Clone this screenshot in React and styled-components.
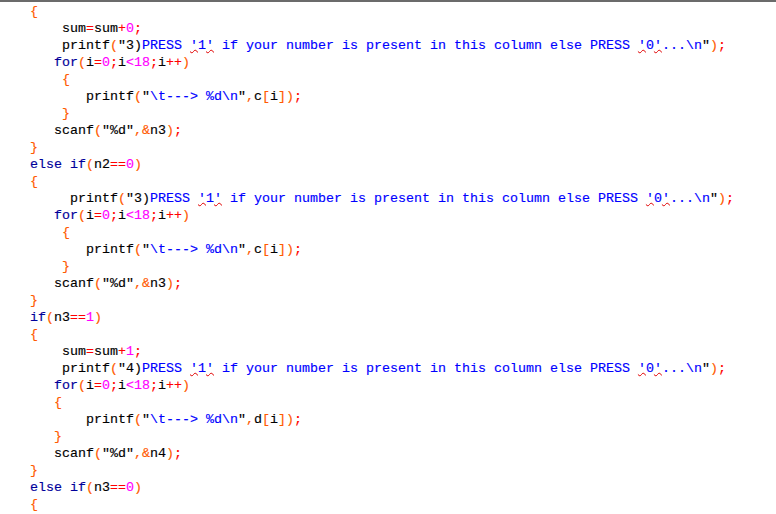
import React from 'react';
import styled, { createGlobalStyle } from 'styled-components';

const Global = createGlobalStyle`
  html, body { margin: 0; padding: 0; background: #ffffff; }
  body { width: 776px; height: 514px; overflow: hidden; }
`;

const Editor = styled.div`
  width: 776px;
  height: 514px;
  box-sizing: border-box;
  border-top: 2px solid #6b6b6b;
  background: #ffffff;
  padding: 1px 0 0 30px;
  font-family: "Liberation Mono", "Courier New", monospace;
  font-size: 13.333px;
  line-height: 17px;
  overflow: hidden;
  -webkit-text-stroke: 0.15px currentColor;
`;

const Line = styled.div`
  height: 17px;
  white-space: pre;
  padding-left: ${p => p.$indent * 8}px;
`;

const COLORS = {
  ident: '#000000',
  kw: '#00009a',
  num: '#ff00ff',
  op: '#ff0000',
  punc: '#ff5a00',
  quote: '#000000',
  str: '#0000ff',
  space: '#000000',
};

const Tok = styled.span`
  color: ${p => COLORS[p.$kind]};
`;

const Squiggle = styled.span`
  color: ${COLORS.str};
  text-decoration-line: underline;
  text-decoration-style: wavy;
  text-decoration-color: #e00000;
  text-decoration-thickness: 1px;
  text-underline-offset: 0px;
`;

const KEYWORDS = new Set(['for', 'if', 'else']);

function tokenize(src) {
  const re = /(\s+)|([A-Za-z_]\w*)|(\d+)|(==|\+\+|[=;+])|(<)|([(){}[\],&])/g;
  const out = [];
  let m;
  while ((m = re.exec(src))) {
    if (m[1]) out.push(['space', m[1]]);
    else if (m[2]) out.push([KEYWORDS.has(m[2]) ? 'kw' : 'ident', m[2]]);
    else if (m[3]) out.push(['num', m[3]]);
    else if (m[4]) out.push(['op', m[4]]);
    else if (m[5]) out.push(['num', m[5]]);
    else if (m[6]) out.push(['punc', m[6]]);
  }
  return out;
}

// segments: c => code, q => black quoted text, s => blue string, w => squiggled quote
const c = s => ({ code: s });
const q = s => ({ q: s });
const s = t => ({ s: t });
const w = t => ({ w: t });

const pressLine = n => [
  c('printf('),
  q(`"${n})`),
  s('PRESS '),
  w("'"), s('1'), w("'"),
  s(' if your number is present in this column else PRESS '),
  w("'"), s('0'), w("'"),
  s('...\\n'),
  q('"'),
  c(');'),
];

const printLine = arr => [c('printf('), q('"'), s('\\t---> %d\\n'), q('"'), c(`,${arr}[i]);`)];
const scanLine = v => [c('scanf('), q('"%d"'), c(`,&${v});`)];

const LINES = [
  [0, [c('{')]],
  [4, [c('sum=sum+0;')]],
  [4, pressLine(3)],
  [3, [c('for(i=0;i<18;i++)')]],
  [4, [c('{')]],
  [7, printLine('c')],
  [4, [c('}')]],
  [3, scanLine('n3')],
  [0, [c('}')]],
  [0, [c('else if(n2==0)')]],
  [0, [c('{')]],
  [5, pressLine(3)],
  [3, [c('for(i=0;i<18;i++)')]],
  [4, [c('{')]],
  [7, printLine('c')],
  [4, [c('}')]],
  [3, scanLine('n3')],
  [0, [c('}')]],
  [0, [c('if(n3==1)')]],
  [0, [c('{')]],
  [4, [c('sum=sum+1;')]],
  [4, pressLine(4)],
  [3, [c('for(i=0;i<18;i++)')]],
  [3, [c('{')]],
  [7, printLine('d')],
  [3, [c('}')]],
  [3, scanLine('n4')],
  [0, [c('}')]],
  [0, [c('else if(n3==0)')]],
  [0, [c('{')]],
];

function renderSegment(seg, key) {
  if (seg.code !== undefined) {
    return tokenize(seg.code).map(([kind, text], i) => (
      <Tok key={`${key}-${i}`} $kind={kind}>{text}</Tok>
    ));
  }
  if (seg.q !== undefined) return <Tok key={key} $kind="quote">{seg.q}</Tok>;
  if (seg.s !== undefined) return <Tok key={key} $kind="str">{seg.s}</Tok>;
  return <Squiggle key={key}>{seg.w}</Squiggle>;
}

export default function App() {
  return (
    <>
      <Global />
      <Editor>
        {LINES.map(([indent, segs], li) => (
          <Line key={li} $indent={indent}>
            {segs.map((seg, si) => renderSegment(seg, `${li}-${si}`))}
          </Line>
        ))}
      </Editor>
    </>
  );
}
